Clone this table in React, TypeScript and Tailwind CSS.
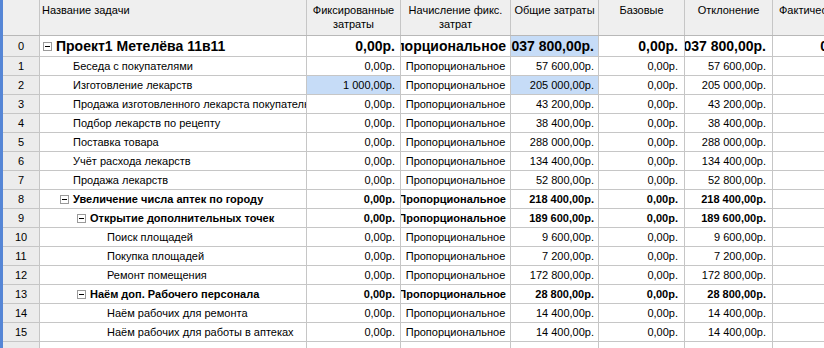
// Project cost table — MS Project-style grid with summary rows, outline
// indentation and clipped overflow columns.

type Row = {
  n: number;
  name: string;
  level: number;
  summary?: boolean;
  big?: boolean;
  fixed: string;
  total: string;
  dev: string;
  hlFixed?: boolean;
  hlTotal?: boolean;
};

const rows: Row[] = [
  { n: 0, name: "Проект1 Метелёва 11в11", level: 0, summary: true, big: true, fixed: "0,00р.", total: "1 037 800,00р.", dev: "1 037 800,00р.", hlTotal: true },
  { n: 1, name: "Беседа с покупателями", level: 1, fixed: "0,00р.", total: "57 600,00р.", dev: "57 600,00р." },
  { n: 2, name: "Изготовление лекарств", level: 1, fixed: "1 000,00р.", total: "205 000,00р.", dev: "205 000,00р.", hlFixed: true, hlTotal: true },
  { n: 3, name: "Продажа изготовленного лекарста покупателю", level: 1, fixed: "0,00р.", total: "43 200,00р.", dev: "43 200,00р." },
  { n: 4, name: "Подбор лекарств по рецепту", level: 1, fixed: "0,00р.", total: "38 400,00р.", dev: "38 400,00р." },
  { n: 5, name: "Поставка товара", level: 1, fixed: "0,00р.", total: "288 000,00р.", dev: "288 000,00р." },
  { n: 6, name: "Учёт расхода лекарств", level: 1, fixed: "0,00р.", total: "134 400,00р.", dev: "134 400,00р." },
  { n: 7, name: "Продажа лекарств", level: 1, fixed: "0,00р.", total: "52 800,00р.", dev: "52 800,00р." },
  { n: 8, name: "Увеличение числа аптек по городу", level: 1, summary: true, fixed: "0,00р.", total: "218 400,00р.", dev: "218 400,00р." },
  { n: 9, name: "Открытие дополнительных точек", level: 2, summary: true, fixed: "0,00р.", total: "189 600,00р.", dev: "189 600,00р." },
  { n: 10, name: "Поиск площадей", level: 3, fixed: "0,00р.", total: "9 600,00р.", dev: "9 600,00р." },
  { n: 11, name: "Покупка площадей", level: 3, fixed: "0,00р.", total: "7 200,00р.", dev: "7 200,00р." },
  { n: 12, name: "Ремонт помещения", level: 3, fixed: "0,00р.", total: "172 800,00р.", dev: "172 800,00р." },
  { n: 13, name: "Наём доп. Рабочего персонала", level: 2, summary: true, fixed: "0,00р.", total: "28 800,00р.", dev: "28 800,00р." },
  { n: 14, name: "Наём рабочих для ремонта", level: 3, fixed: "0,00р.", total: "14 400,00р.", dev: "14 400,00р." },
  { n: 15, name: "Наём рабочих для работы в аптеках", level: 3, fixed: "0,00р.", total: "14 400,00р.", dev: "14 400,00р." },
];

const summaryPad: Record<number, string> = { 0: "pl-[3px]", 1: "pl-[20px]", 2: "pl-[37px]", 3: "pl-[54px]" };
const leafPad: Record<number, string> = { 0: "pl-[16px]", 1: "pl-[33px]", 2: "pl-[50px]", 3: "pl-[67px]" };

const line = "border-r border-[#c6c6c6]";
const hl = "bg-[#c6dcf7]";

function Minus() {
  return (
    <span className="mr-[4px] flex h-[9px] w-[9px] shrink-0 items-center justify-center border border-[#9a9a9a] bg-white">
      <span className="h-px w-[5px] bg-black" />
    </span>
  );
}

function Num({ v, w, bg, pr = "pr-[4px]" }: { v: string; w: string; bg?: string; pr?: string }) {
  return (
    <div className={`${w} ${line} ${bg ?? ""} ${pr} flex shrink-0 items-center justify-end overflow-hidden whitespace-nowrap`}>
      <span className="shrink-0">{v}</span>
    </div>
  );
}

export default function App() {
  return (
    <div className="flex h-[348px] w-[824px] overflow-hidden bg-white text-[11px] text-black" style={{ fontFamily: '"Liberation Sans", Arial, sans-serif' }}>
      <div className="w-[3px] shrink-0 bg-[#5686d6]" />
      <div className="flex flex-col">
        {/* header */}
        <div className="flex h-[36px] shrink-0 border-b border-[#b8b8b8] bg-[#efefef] leading-[14px]">
          <div className={`w-[37px] shrink-0 ${line}`} />
          <div className={`w-[267px] shrink-0 ${line} pl-[2px] pt-[3px]`}>Название задачи</div>
          <div className={`w-[94px] shrink-0 ${line} pt-[3px] text-center`}>Фиксированные<br />затраты</div>
          <div className={`w-[110px] shrink-0 ${line} pt-[3px] text-center`}>Начисление фикс.<br />затрат</div>
          <div className={`w-[88px] shrink-0 ${line} pt-[3px] text-center`}>Общие затраты</div>
          <div className={`w-[86px] shrink-0 ${line} pt-[3px] text-center`}>Базовые</div>
          <div className={`w-[88px] shrink-0 ${line} pt-[3px] text-center`}>Отклонение</div>
          <div className={`w-[93px] shrink-0 ${line} overflow-hidden whitespace-nowrap pl-[6px] pt-[3px]`}>Фактические</div>
        </div>

        {rows.map((r) => {
          const weight = r.summary ? "font-bold" : "";
          const size = r.big ? "h-[21px] text-[14px]" : "h-[19px]";
          return (
            <div key={r.n} className={`flex shrink-0 border-b border-[#c6c6c6] ${size} ${weight}`}>
              <div className={`flex w-[37px] shrink-0 items-center justify-center bg-[#ececec] text-[11px] font-normal ${line}`}>{r.n}</div>
              <div className={`flex w-[267px] shrink-0 items-center overflow-hidden whitespace-nowrap ${line} ${r.summary ? summaryPad[r.level] : leafPad[r.level]}`}>
                {r.summary && <Minus />}
                <span>{r.name}</span>
              </div>
              <Num v={r.fixed} w="w-[94px]" bg={r.hlFixed ? hl : ""} pr="pr-[5px]" />
              <div className={`flex w-[110px] shrink-0 items-center overflow-hidden whitespace-nowrap ${line} ${r.summary ? "justify-end pr-[4px]" : "justify-center"}`}>
                <span className="shrink-0">Пропорциональное</span>
              </div>
              <Num v={r.total} w="w-[88px]" bg={r.hlTotal ? hl : ""} pr="pr-[4px]" />
              <Num v="0,00р." w="w-[86px]" pr="pr-[6px]" />
              <Num v={r.dev} w="w-[88px]" pr="pr-[6px]" />
              <Num v="0,00р." w="w-[93px]" pr="pr-[5px]" />
            </div>
          );
        })}

        <div className="flex h-[19px] shrink-0">
          <div className={`w-[37px] shrink-0 bg-[#ececec] ${line}`} />
          <div className={`w-[267px] shrink-0 ${line}`} />
          <div className={`w-[94px] shrink-0 ${line}`} />
          <div className={`w-[110px] shrink-0 ${line}`} />
          <div className={`w-[88px] shrink-0 ${line}`} />
          <div className={`w-[86px] shrink-0 ${line}`} />
          <div className={`w-[88px] shrink-0 ${line}`} />
          <div className={`w-[93px] shrink-0 ${line}`} />
        </div>
      </div>
    </div>
  );
}
